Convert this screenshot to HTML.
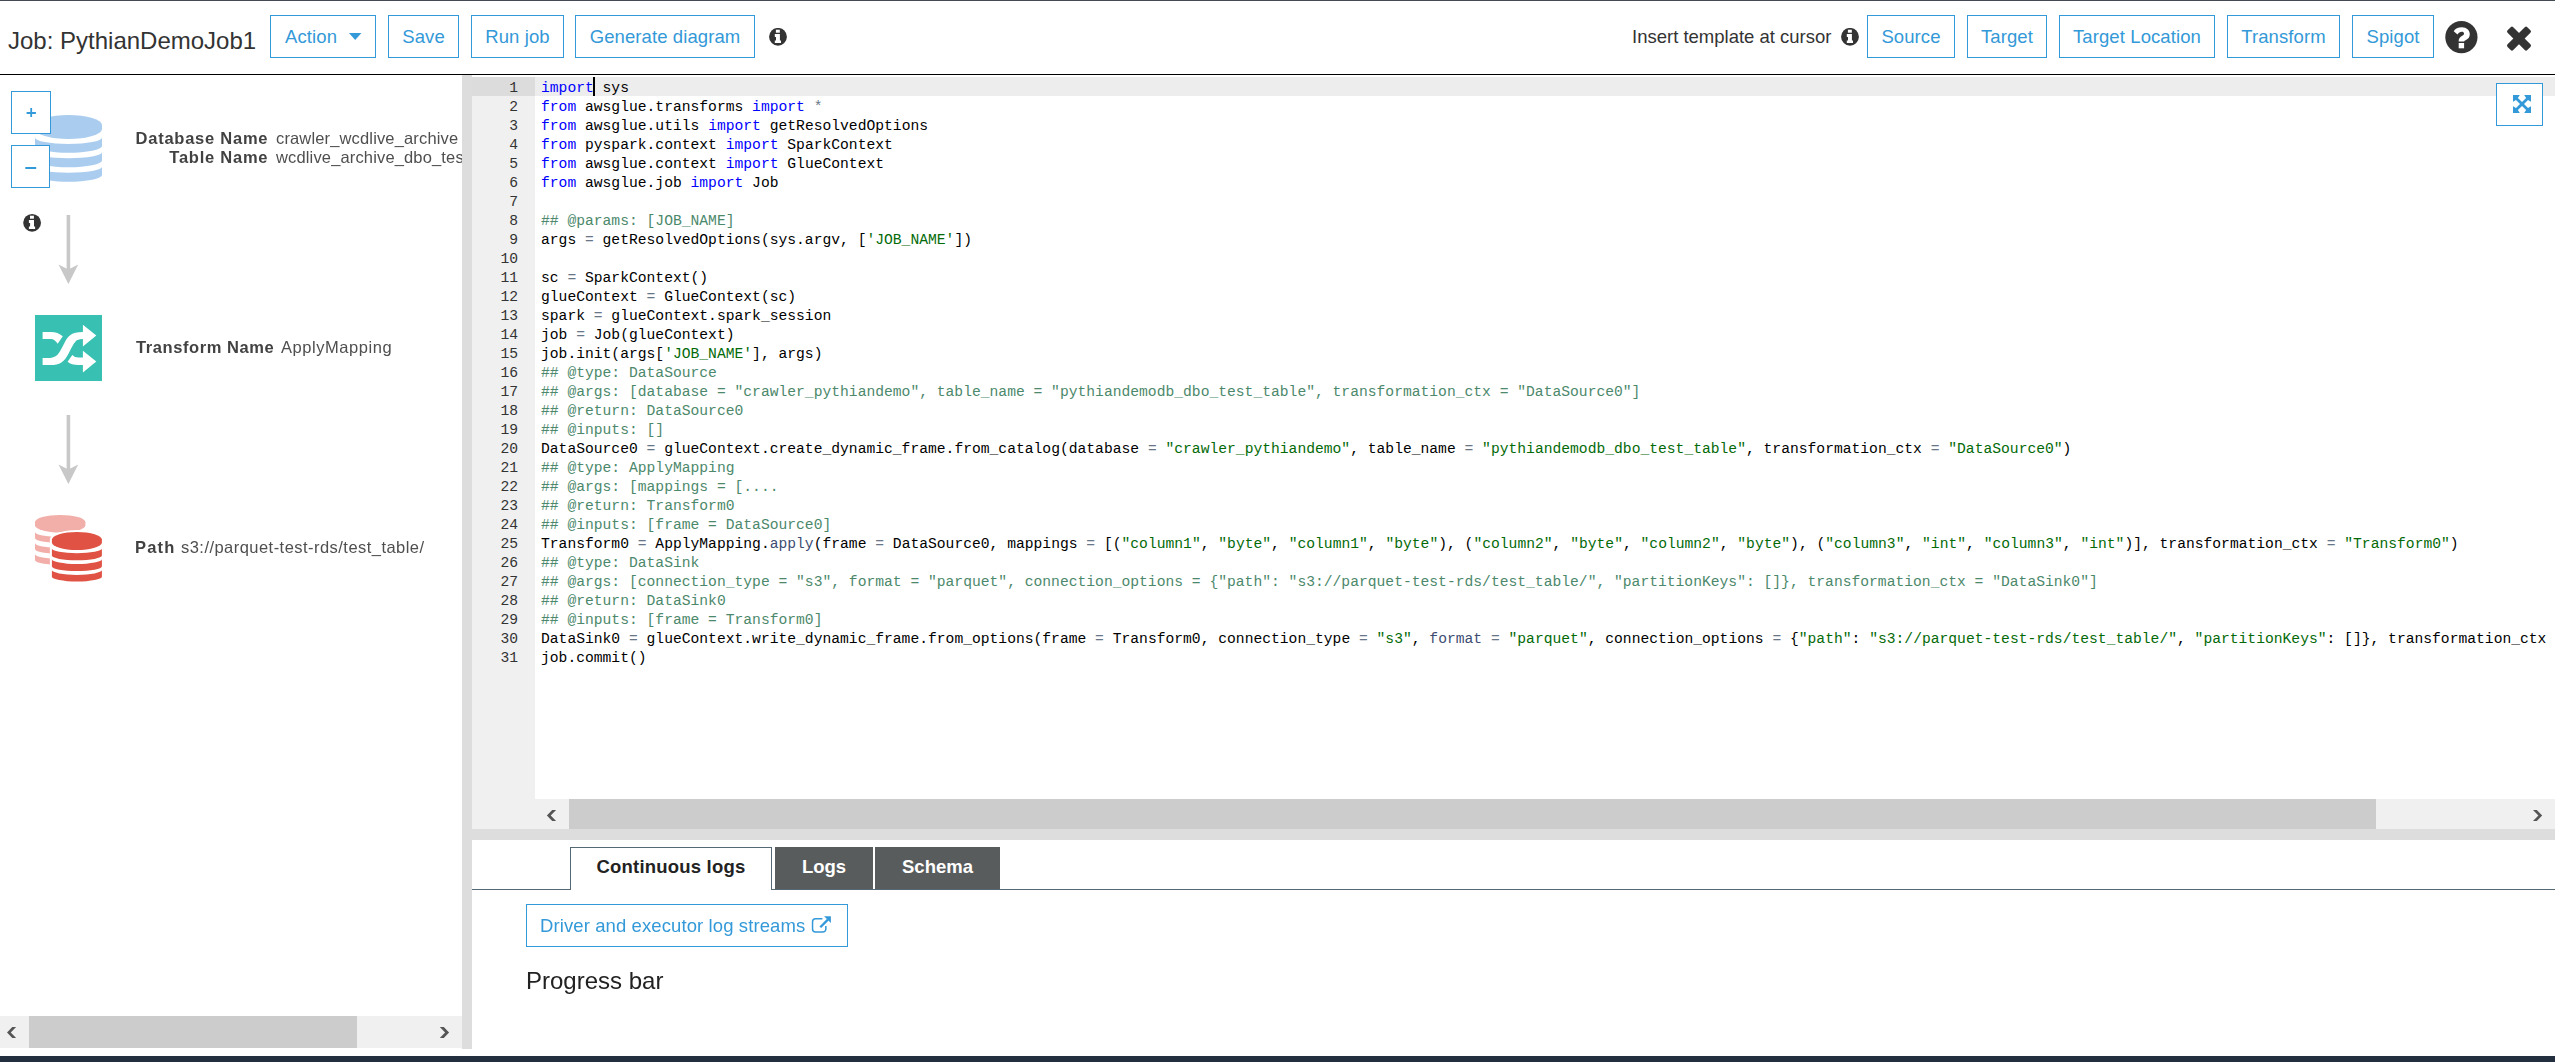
<!DOCTYPE html>
<html><head><meta charset="utf-8">
<style>
html,body{margin:0;padding:0;background:#fff;width:2562px;height:1062px;overflow:hidden;font-family:"Liberation Sans",sans-serif;position:relative;}
.a{position:absolute;}
#topline{left:0;top:0;width:2555px;height:1px;background:#434a55;}
#hdrline{left:0;top:74px;width:2555px;height:1px;background:#000;}
.title{left:8px;top:26px;font-size:24px;line-height:30px;color:#333;white-space:nowrap;}
.btn{position:absolute;top:15px;height:41px;border:1px solid #3399d8;color:#3399d8;font-size:18.5px;line-height:41px;letter-spacing:0.1px;white-space:nowrap;box-sizing:content-box;text-align:center;background:#fff;}
.hdrtxt{font-size:18.5px;color:#333;white-space:nowrap;line-height:24px;}
#splitL{left:462px;top:75px;width:10px;height:974px;background:#dddddd;}
#bottombar{left:0;top:1056px;width:2555px;height:6px;background:#232f3e;}
/* graph */
.gtxt{position:absolute;font-size:16.5px;color:#4f4f4f;white-space:nowrap;line-height:20px;will-change:transform;}
.gtxt b{color:#424242;}
#graph{left:0;top:75px;width:462px;height:941px;overflow:hidden;}
.zbtn{position:absolute;border:1px solid #3399d8;background:#fff;box-sizing:border-box;}
/* editor */
#gutter{left:472px;top:77px;width:63px;height:752px;background:#f0f0f0;}
#gutact{left:472px;top:77px;width:63px;height:19px;background:#dcdcdc;}
#lineact{left:535px;top:77px;width:2020px;height:19px;background:#ededed;}
#code{left:541px;top:79px;width:2014px;height:722px;overflow:hidden;font-family:"Liberation Mono",monospace;font-size:14.665px;line-height:19px;color:#000;white-space:pre;}
#code div{height:19px;}
#code i{font-style:normal;}
#code .k{color:#0000ff;}
#code .o{color:rgb(104,118,135);}
#code .s{color:rgb(3,106,7);}
#code .c{color:rgb(76,136,107);}
#code .f{color:rgb(60,76,114);}
#nums{left:472px;top:79px;width:46px;font-family:"Liberation Mono",monospace;font-size:14.665px;line-height:19px;color:#333;text-align:right;white-space:pre;}
#cursor{left:593px;top:77px;width:2px;height:19px;background:#000;}
#hscroll{left:472px;top:799px;width:2083px;height:30px;background:#f0f0f0;}
#hthumb{left:569px;top:799px;width:1807px;height:30px;background:#cccccc;}
#splitB{left:472px;top:829px;width:2083px;height:11px;background:#dddddd;}
#maxbtn{left:2496px;top:83px;width:47px;height:43px;box-sizing:border-box;border:1px solid #3399d8;background:#fff;}
/* bottom panel */
#tabline{left:472px;top:889px;width:2083px;height:1px;background:#546875;}
.tab{position:absolute;top:847px;height:42px;font-weight:bold;font-size:18.5px;line-height:42px;text-align:center;white-space:nowrap;box-sizing:border-box;}
#lscroll{left:0;top:1016px;width:462px;height:32px;background:#f0f0f0;}
#lthumb{left:29px;top:1016px;width:328px;height:32px;background:#cccccc;}
</style></head><body>
<div class="a" id="topline"></div>
<div class="a title">Job: PythianDemoJob1</div>
<div class="btn" style="left:270px;width:104px;text-align:left;"><span style="position:absolute;left:14px;">Action</span>
<svg class="a" style="left:78px;top:17px" width="13" height="8" viewBox="0 0 13 8"><path d="M0 0H12.4L6.2 6.9Z" fill="#3399d8"/></svg></div>
<div class="btn" style="left:388px;width:69px;">Save</div>
<div class="btn" style="left:471px;width:91px;">Run job</div>
<div class="btn" style="left:575px;width:178px;">Generate diagram</div>
<svg class="a" style="left:769px;top:28px" width="18" height="18" viewBox="0 0 18 18"><circle cx="9" cy="8.8" r="8.9" fill="#333"/><rect x="6.9" y="1.7" width="3.9" height="3.0" fill="#fff"/><path d="M5.8 5.9H10.9V12.6H12V15.1H5.8V12.6H7V9H5.8Z" fill="#fff"/></svg>
<div class="a hdrtxt" style="left:1632px;top:25px;">Insert template at cursor</div>
<svg class="a" style="left:1841px;top:28px" width="18" height="18" viewBox="0 0 18 18"><circle cx="9" cy="8.8" r="8.9" fill="#333"/><rect x="6.9" y="1.7" width="3.9" height="3.0" fill="#fff"/><path d="M5.8 5.9H10.9V12.6H12V15.1H5.8V12.6H7V9H5.8Z" fill="#fff"/></svg>
<div class="btn" style="left:1867px;width:86px;">Source</div>
<div class="btn" style="left:1967px;width:78px;">Target</div>
<div class="btn" style="left:2059px;width:154px;">Target Location</div>
<div class="btn" style="left:2227px;width:111px;">Transform</div>
<div class="btn" style="left:2352px;width:80px;">Spigot</div>
<svg class="a" style="left:2445px;top:21px" width="33" height="33" viewBox="0 0 33 33"><circle cx="16.4" cy="16.2" r="16.1" fill="#333"/><path fill="#fff" d="M8.7 10.3C10.2 7.6 13 6.3 17 6.3C21.5 6.3 24.8 9.5 24.8 13.3C24.8 16.5 23 18 21 19C19.8 19.6 19.1 20 19.1 20.6H13.6C13.6 17.5 15 16 17.2 14.7C18.6 13.9 19 13.3 19 12.4C19 11.3 18 10.8 16.8 10.8C15 10.8 13.7 11.8 12.5 13.6Z"/><rect x="13.7" y="22" width="5.4" height="5.3" fill="#fff"/></svg>
<svg class="a" style="left:2505px;top:25px" width="28" height="28" viewBox="0 0 28 28"><g fill="#333"><rect x="0.05" y="9.6" width="27.9" height="8" rx="1.8" transform="rotate(45 14 13.6)"/><rect x="0.05" y="9.6" width="27.9" height="8" rx="1.8" transform="rotate(-45 14 13.6)"/></g></svg>
<div class="a" id="hdrline"></div>

<div class="a" id="graph">
  <svg class="a" style="left:0;top:0" width="462" height="941" viewBox="0 75 462 941">
    <g fill="#aacdef">
      <path d="M35 125A33.5 10 0 0 1 102 125V129A33.5 10 0 0 1 35 129Z"/>
      <path d="M35 137.5A33.5 6.5 0 0 0 102 137.5V146A33.5 6.8 0 0 1 35 146Z"/>
      <path d="M35 152.3A33.5 6 0 0 0 102 152.3V160.5A33.5 6.8 0 0 1 35 160.5Z"/>
      <path d="M35 166.8A33.5 6 0 0 0 102 166.8V175A33.5 6.8 0 0 1 35 175Z"/>
    </g>
    <g fill="#c8c8c8">
      <rect x="66.6" y="215" width="3.6" height="55"/>
      <path d="M58.5 264.5L68.4 284L78.2 264.5L68.4 269.5Z"/>
      <rect x="66.6" y="415" width="3.6" height="55"/>
      <path d="M58.5 464.5L68.4 484L78.2 464.5L68.4 469.5Z"/>
    </g>
    <rect x="35" y="315" width="67" height="66" fill="#38c1b2"/>
    <path fill="#fff" d="M42.6 332H51C55.5 332 59.5 333.5 62.8 336.3L57.7 343.8C55.5 341 53.5 339.1 51 339.1H42.6Z"/>
    <path fill="#fff" d="M42.6 357.9H50.1C53.5 357.9 56 356.5 57.7 354.6C60 352 62 347.5 64.3 343.3C66.5 339 68 336.5 70.8 334.8C73.5 332.8 77 332 82.6 332H82.9V324.7L96.3 335.6L82.9 346.6V339.1H82.6C79 339.1 77 340 75.6 341.4C73 344 71 349 69 352.7C66.5 357.5 64.5 360.5 61.4 362.4C58.5 364.2 55 365 50.1 365H42.6Z"/>
    <path fill="#fff" d="M72.3 355.1C74 356.8 76 357.6 78.4 357.6H82.9V350.8L96.3 361.4L82.9 372.5V365H78.4C73.5 365 70.3 363.8 67.6 361.7Z"/>
    <g>
      <g fill="#f2aea8">
        <path d="M35 522.2A25.2 7.3 0 0 1 85.4 522.2V525.2A25.2 7.3 0 0 1 35 525.2Z"/>
        <path d="M35 532A25.2 5 0 0 0 85.4 532V538A25.2 5 0 0 1 35 538Z"/>
        <path d="M35 543A25.2 5 0 0 0 85.4 543V549A25.2 5 0 0 1 35 549Z"/>
        <path d="M35 554A25.2 5 0 0 0 85.4 554V560A25.2 5 0 0 1 35 560Z"/>
      </g>
      <g fill="#fff">
        <path d="M49.9 539.5A27 9.5 0 0 1 103.9 539.5V542.5A27 9.5 0 0 1 49.9 542.5Z"/>
        <rect x="49.9" y="541" width="54" height="42"/>
      </g>
      <g fill="#e05243">
        <path d="M51.9 539.5A25 7.5 0 0 1 101.9 539.5V542.5A25 7.5 0 0 1 51.9 542.5Z"/>
        <path d="M51.9 548.5A25 4.7 0 0 0 101.9 548.5V555.5A25 4.8 0 0 1 51.9 555.5Z"/>
        <path d="M51.9 559.3A25 4.7 0 0 0 101.9 559.3V566.3A25 4.8 0 0 1 51.9 566.3Z"/>
        <path d="M51.9 570A25 4.9 0 0 0 101.9 570V576.7A25 4.8 0 0 1 51.9 576.7Z"/>
      </g>
    </g>
    <circle cx="32.1" cy="222.8" r="8.9" fill="#333"/>
    <rect x="30" y="215.7" width="3.9" height="3.0" fill="#fff"/>
    <path d="M28.9 219.9H34V226.6H35.1V229.1H28.9V226.6H30.1V223H28.9Z" fill="#fff"/>
  </svg>
  <div class="zbtn" style="left:11px;top:16px;width:40px;height:43px;"><svg class="a" style="left:14px;top:15px" width="11" height="11" viewBox="0 0 11 11"><path d="M5.2 0.9V10M0.6 6H9.9" stroke="#3399d8" stroke-width="1.8"/></svg></div>
  <div class="zbtn" style="left:11px;top:70px;width:39px;height:43px;"><svg class="a" style="left:13px;top:20px" width="12" height="4" viewBox="0 0 12 4"><rect x="0.3" y="1" width="10.9" height="2" fill="#3399d8"/></svg></div>
  <div class="gtxt" style="left:100px;top:53px;width:167.5px;text-align:right;"><b style="letter-spacing:0.75px;margin-right:-0.75px">Database Name</b></div>
  <div class="gtxt" style="left:275.5px;top:53px;letter-spacing:0.15px;">crawler_wcdlive_archive</div>
  <div class="gtxt" style="left:100px;top:72px;width:167.5px;text-align:right;"><b style="letter-spacing:0.75px;margin-right:-0.75px">Table Name</b></div>
  <div class="gtxt" style="left:275.5px;top:72px;letter-spacing:0.15px;">wcdlive_archive_dbo_test_table</div>
  <div class="gtxt" style="left:136px;top:262px;"><b style="letter-spacing:0.58px">Transform Name</b></div>
  <div class="gtxt" style="left:281px;top:262px;letter-spacing:0.55px;">ApplyMapping</div>
  <div class="gtxt" style="left:134.7px;top:462px;"><b style="letter-spacing:1.2px">Path</b></div>
  <div class="gtxt" style="left:180.5px;top:462px;letter-spacing:0.46px;">s3://parquet-test-rds/test_table/</div>
</div>
<div class="a" id="lscroll"></div>
<div class="a" id="lthumb"></div>
<svg class="a" style="left:0;top:0;overflow:visible" width="1" height="1"><path fill="#555" d="M12.3 1026.9 L16.1 1026.9 L10.8 1032.4 L16.1 1038 L12.3 1038 L7 1032.4Z"/></svg>
<svg class="a" style="left:0;top:0;overflow:visible" width="1" height="1"><path fill="#555" d="M439.8 1026.9 L443.8 1026.9 L449.1 1032.4 L443.8 1038 L439.8 1038 L445.1 1032.4Z"/></svg>

<div class="a" id="splitL"></div>
<div class="a" id="gutter"></div>
<div class="a" id="gutact"></div>
<div class="a" id="lineact"></div>
<div class="a" id="nums">1
2
3
4
5
6
7
8
9
10
11
12
13
14
15
16
17
18
19
20
21
22
23
24
25
26
27
28
29
30
31</div>
<div class="a" id="code"><div><i class="k">import</i> sys</div><div><i class="k">from</i> awsglue.transforms <i class="k">import</i> <i class="o">*</i></div><div><i class="k">from</i> awsglue.utils <i class="k">import</i> getResolvedOptions</div><div><i class="k">from</i> pyspark.context <i class="k">import</i> SparkContext</div><div><i class="k">from</i> awsglue.context <i class="k">import</i> GlueContext</div><div><i class="k">from</i> awsglue.job <i class="k">import</i> Job</div><div></div><div><i class="c">## @params: [JOB_NAME]</i></div><div>args <i class="o">=</i> getResolvedOptions(sys.argv, [<i class="s">'JOB_NAME'</i>])</div><div></div><div>sc <i class="o">=</i> SparkContext()</div><div>glueContext <i class="o">=</i> GlueContext(sc)</div><div>spark <i class="o">=</i> glueContext.spark_session</div><div>job <i class="o">=</i> Job(glueContext)</div><div>job.init(args[<i class="s">'JOB_NAME'</i>], args)</div><div><i class="c">## @type: DataSource</i></div><div><i class="c">## @args: [database = "crawler_pythiandemo", table_name = "pythiandemodb_dbo_test_table", transformation_ctx = "DataSource0"]</i></div><div><i class="c">## @return: DataSource0</i></div><div><i class="c">## @inputs: []</i></div><div>DataSource0 <i class="o">=</i> glueContext.create_dynamic_frame.from_catalog(database <i class="o">=</i> <i class="s">"crawler_pythiandemo"</i>, table_name <i class="o">=</i> <i class="s">"pythiandemodb_dbo_test_table"</i>, transformation_ctx <i class="o">=</i> <i class="s">"DataSource0"</i>)</div><div><i class="c">## @type: ApplyMapping</i></div><div><i class="c">## @args: [mappings = [....</i></div><div><i class="c">## @return: Transform0</i></div><div><i class="c">## @inputs: [frame = DataSource0]</i></div><div>Transform0 <i class="o">=</i> ApplyMapping.<i class="f">apply</i>(frame <i class="o">=</i> DataSource0, mappings <i class="o">=</i> [(<i class="s">"column1"</i>, <i class="s">"byte"</i>, <i class="s">"column1"</i>, <i class="s">"byte"</i>), (<i class="s">"column2"</i>, <i class="s">"byte"</i>, <i class="s">"column2"</i>, <i class="s">"byte"</i>), (<i class="s">"column3"</i>, <i class="s">"int"</i>, <i class="s">"column3"</i>, <i class="s">"int"</i>)], transformation_ctx <i class="o">=</i> <i class="s">"Transform0"</i>)</div><div><i class="c">## @type: DataSink</i></div><div><i class="c">## @args: [connection_type = "s3", format = "parquet", connection_options = {"path": "s3://parquet-test-rds/test_table/", "partitionKeys": []}, transformation_ctx = "DataSink0"]</i></div><div><i class="c">## @return: DataSink0</i></div><div><i class="c">## @inputs: [frame = Transform0]</i></div><div>DataSink0 <i class="o">=</i> glueContext.write_dynamic_frame.from_options(frame <i class="o">=</i> Transform0, connection_type <i class="o">=</i> <i class="s">"s3"</i>, <i class="f">format</i> <i class="o">=</i> <i class="s">"parquet"</i>, connection_options <i class="o">=</i> {<i class="s">"path"</i>: <i class="s">"s3://parquet-test-rds/test_table/"</i>, <i class="s">"partitionKeys"</i>: []}, transformation_ctx <i class="o">=</i> <i class="s">"DataSink0"</i>)</div><div>job.commit()</div></div>
<div class="a" id="cursor"></div>
<div class="a" id="hscroll"></div>
<div class="a" id="hthumb"></div>
<svg class="a" style="left:0;top:0;overflow:visible" width="1" height="1"><path fill="#555" d="M552.2 810 L556.1 810 L550.7 815.5 L556.1 820.9 L552.2 820.9 L546.9 815.5Z"/></svg>
<svg class="a" style="left:0;top:0;overflow:visible" width="1" height="1"><path fill="#555" d="M2533 810 L2536.8 810 L2542.2 815.5 L2536.8 820.9 L2533 820.9 L2538.4 815.5Z"/></svg>
<div class="a" id="splitB"></div>
<div class="a" id="maxbtn"><svg class="a" style="left:16px;top:11px" width="18" height="18" viewBox="0 0 18 18"><path fill="#3399d8" d="M0 0H6.8L4.9 3L9 7L13.1 3L11.2 0H18V6.8L15 4.9L11 9L15 13.1L18 11.2V18H11.2L13.1 15L9 11L4.9 15L6.8 18H0V11.2L3 13.1L7 9L3 4.9L0 6.8Z"/></svg></div>

<div class="a" id="tabline"></div>
<div class="tab" style="left:570px;width:202px;height:43px;border:1px solid #546875;border-bottom:none;background:#fff;color:#222;line-height:38px;letter-spacing:0.2px;">Continuous logs</div>
<div class="tab" style="left:775px;width:98px;background:#585c5d;color:#fff;line-height:40px;">Logs</div>
<div class="tab" style="left:875px;width:125px;background:#585c5d;color:#fff;line-height:40px;">Schema</div>
<div class="a" style="left:526px;top:904px;width:322px;height:43px;box-sizing:border-box;border:1px solid #3399d8;"></div>
<div class="a" style="left:540px;top:914px;font-size:18.5px;line-height:24px;color:#3399d8;white-space:nowrap;letter-spacing:0.1px;">Driver and executor log streams</div>
<svg class="a" style="left:810px;top:914px" width="23" height="21" viewBox="0 0 23 21"><path d="M12.4 4.65H5.55A3 3 0 0 0 2.55 7.65V15.05A3 3 0 0 0 5.55 18.05H12.85A3 3 0 0 0 15.85 15.05V12.1" fill="none" stroke="#3399d8" stroke-width="1.5"/><path d="M10.3 13.2L17.9 5.6" stroke="#3399d8" stroke-width="2.3"/><path d="M14.1 2.3H20.9V9.1Z" fill="#3399d8"/></svg>
<div class="a" style="left:526px;top:966px;font-size:24px;line-height:30px;color:#222;white-space:nowrap;">Progress bar</div>

<div class="a" id="bottombar"></div>
</body></html>
